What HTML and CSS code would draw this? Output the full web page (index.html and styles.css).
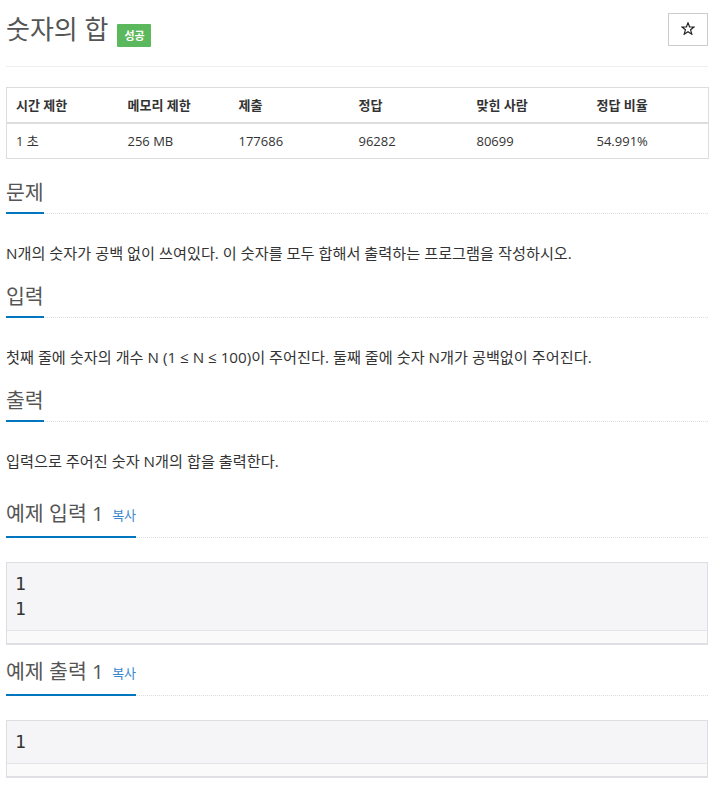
FILE: index.html
```html
<!DOCTYPE html>
<html lang="ko">
<head>
<meta charset="utf-8">
<title>숫자의 합</title>
<link rel="stylesheet" href="styles.css">
</head>
<body>
<div class="container">
  <div class="page-header">
    <h1 class="title"><span class="title-text">숫자의 합</span><span class="badge">성공</span></h1>
    <button class="star-btn" type="button" aria-label="즐겨찾기">
      <svg width="14" height="13" viewBox="0 0 14 13"><polygon points="7,0.8 8.6,4.9 13,5 9.6,7.8 10.8,12.2 7,9.7 3.2,12.2 4.4,7.8 1,5 5.4,4.9" fill="none" stroke="#222" stroke-width="1.2" stroke-linejoin="miter"/></svg>
    </button>
  </div>

  <table class="info">
    <colgroup>
      <col class="c1"><col class="c2"><col class="c3"><col class="c4"><col class="c5"><col class="c6">
    </colgroup>
    <thead>
      <tr><th>시간 제한</th><th>메모리 제한</th><th>제출</th><th>정답</th><th>맞힌 사람</th><th>정답 비율</th></tr>
    </thead>
    <tbody>
      <tr><td>1 초</td><td>256 MB</td><td>177686</td><td>96282</td><td>80699</td><td>54.991%</td></tr>
    </tbody>
  </table>

  <section class="section">
    <div class="headline"><h2>문제</h2></div>
    <p>N개의 숫자가 공백 없이 쓰여있다. 이 숫자를 모두 합해서 출력하는 프로그램을 작성하시오.</p>
  </section>

  <section class="section">
    <div class="headline"><h2>입력</h2></div>
    <p>첫째 줄에 숫자의 개수 N (1 ≤ N ≤ 100)이 주어진다. 둘째 줄에 숫자 N개가 공백없이 주어진다.</p>
  </section>

  <section class="section">
    <div class="headline"><h2>출력</h2></div>
    <p>입력으로 주어진 숫자 N개의 합을 출력한다.</p>
  </section>

  <section class="sample sample-in">
    <div class="headline sample-head"><h2>예제 입력 1 <button class="copy" type="button">복사</button></h2></div>
    <div class="sample-box"><pre>1
1</pre><div class="track"></div></div>
  </section>

  <section class="sample sample-out">
    <div class="headline sample-head"><h2>예제 출력 1 <button class="copy" type="button">복사</button></h2></div>
    <div class="sample-box"><pre>1</pre><div class="track"></div></div>
  </section>
</div>
</body>
</html>
```

FILE: styles.css
```css
* { box-sizing: border-box; }

body {
  margin: 0;
  background: #fff;
  color: #333;
  font-family: "Open Sans", "Noto Sans CJK KR", sans-serif;
  font-size: 14px;
}

.container {
  width: 702px;
  margin-left: 6px;
}

.page-header {
  display: flex;
  justify-content: space-between;
  align-items: center;
  padding-top: 11px;
  padding-bottom: 19px;
  border-bottom: 1px solid #eee;
}

.title {
  margin: 0;
  display: flex;
  align-items: center;
  height: 36px;
  font-size: 26px;
  line-height: 36px;
  font-weight: 400;
  color: #555;
}

.badge {
  margin-left: 9px;
  margin-top: 13px;
  background: #5cb85c;
  color: #fff;
  font-size: 11px;
  font-weight: 700;
  line-height: 23px;
  height: 23px;
  padding: 0 6px 0 7px;
  border-radius: 1px;
}

.star-btn {
  width: 40px;
  height: 33px;
  padding: 0;
  background: #fff;
  border: 1px solid #ccc;
  border-radius: 0;
  display: flex;
  align-items: center;
  justify-content: center;
}

.star-btn svg { display: block; margin-top: -1px; }

.info {
  width: 702px;
  margin-top: 20px;
  border-collapse: collapse;
  table-layout: fixed;
  border: 1px solid #ddd;
  font-size: 13px;
  color: #333;
}

.c1 { width: 112px; }
.c2 { width: 111px; }
.c3 { width: 120px; }
.c4 { width: 118px; }
.c5 { width: 120px; }
.c6 { width: 121px; }

.info th,
.info td {
  text-align: left;
  padding: 8px 8px 8px 9px;
  line-height: 18px;
  white-space: nowrap;
}

.info th {
  font-weight: 700;
  border-bottom: 2px solid #ddd;
}

.section { margin-top: 23px; }

.headline {
  border-bottom: 1px dotted #ddd;
}

.headline h2 {
  display: inline-block;
  margin: 0 0 -1px 0;
  padding-bottom: 9px;
  border-bottom: 2px solid #0076c0;
  font-size: 20.5px;
  line-height: 21px;
  font-weight: 400;
  color: #555;
}

.section p {
  margin: 29px 0 0 0;
  font-size: 15.2px;
  line-height: 20px;
  color: #333;
}

.sample-in { margin-top: 32px; }
.sample-out { margin-top: 16px; }

.sample-head h2 { padding-bottom: 12px; }

.copy {
  margin: 0 0 0 3px;
  padding: 0;
  border: 0;
  background: none;
  font-family: "Open Sans", "Noto Sans CJK KR", sans-serif;
  font-size: 13px;
  color: #3a86cc;
  vertical-align: 1px;
}

.sample-box {
  margin-top: 24px;
  background: #f5f5f7;
  border: 1px solid #dedee2;
  border-bottom: 2px solid #e0e0e4;
}

.sample-box pre {
  margin: 0;
  padding: 8px 8px 9px 8px;
  font-family: "DejaVu Sans Mono", "Liberation Mono", monospace;
  font-size: 18px;
  line-height: 25px;
  color: #333;
}

.track {
  height: 13px;
  background: #fafafa;
  border-top: 1px solid #e4e4e7;
}
```
